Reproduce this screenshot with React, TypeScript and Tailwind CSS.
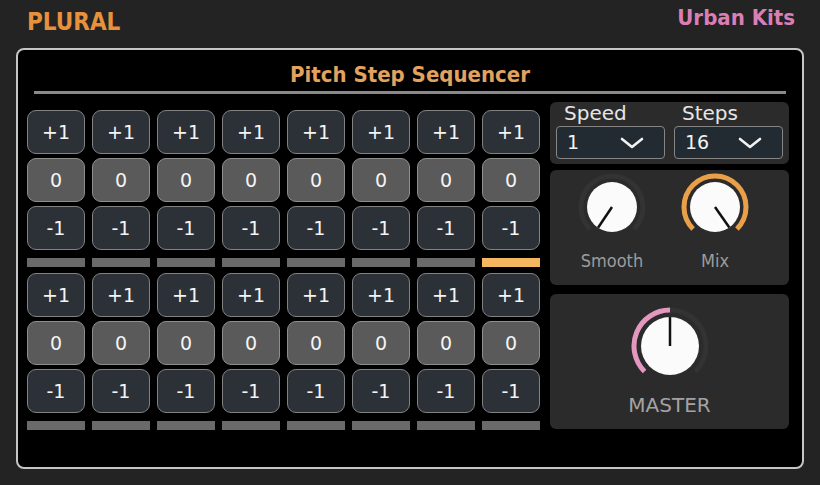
import React from "react";

const cond = { fontFamily: '"DejaVu Sans Condensed", "DejaVu Sans", sans-serif' };

function polar(cx: number, cy: number, r: number, deg: number) {
  const a = (deg * Math.PI) / 180;
  return [cx + r * Math.cos(a), cy + r * Math.sin(a)];
}

function arc(cx: number, cy: number, r: number, from: number, to: number) {
  const [x0, y0] = polar(cx, cy, r, from);
  const [x1, y1] = polar(cx, cy, r, to);
  const large = to - from > 180 ? 1 : 0;
  return `M ${x0} ${y0} A ${r} ${r} 0 ${large} 1 ${x1} ${y1}`;
}

function Knob({
  size,
  r,
  ring,
  value,
  color,
  pointer,
}: {
  size: number;
  r: number;
  ring: number;
  value: number;
  color: string;
  pointer: number;
}) {
  const c = size / 2;
  const [px, py] = polar(c, c, r, pointer);
  return (
    <svg width={size} height={size} viewBox={`0 0 ${size} ${size}`}>
      <path d={arc(c, c, ring, 135, 405)} stroke="#333" strokeWidth="5" fill="none" />
      {value > 135 && (
        <path d={arc(c, c, ring, 135, value)} stroke={color} strokeWidth="5" fill="none" />
      )}
      <circle cx={c} cy={c} r={r} fill="#fbfbfb" />
      <line x1={c} y1={c} x2={px} y2={py} stroke="#111" strokeWidth="2.5" />
    </svg>
  );
}

function StepButton({ label, mid }: { label: string; mid?: boolean }) {
  return (
    <div
      className={`h-[44px] w-[58px] rounded-[9px] border-[1.5px] flex items-center justify-center text-[19px] text-[#f4f4f4] ${
        mid ? "bg-[#5a5a5a] border-[#8e8e8e]" : "bg-[#2c3137] border-[#828282]"
      }`}
    >
      {label}
    </div>
  );
}

function StepGroup({ active }: { active: number }) {
  return (
    <div className="flex gap-[7px]">
      {Array.from({ length: 8 }).map((_, i) => (
        <div key={i} className="flex flex-col gap-[4px]">
          <StepButton label="+1" />
          <StepButton label="0" mid />
          <StepButton label="-1" />
          <div
            className={`mt-[4px] h-[9px] w-[58px] ${
              i === active ? "bg-[#f4b75f]" : "bg-[#6a6a6a]"
            }`}
          />
        </div>
      ))}
    </div>
  );
}

function Dropdown({ value }: { value: string }) {
  return (
    <div className="h-[33px] w-[110px] rounded-[4px] border-[1.5px] border-[#858585] bg-[#222b32] flex items-center justify-between pl-[10px] pr-[20px] text-[19px] text-[#f2f2f2]">
      <span>{value}</span>
      <svg width="24" height="12" viewBox="0 0 24 12">
        <path d="M2 2 L12 10 L22 2" stroke="#f2f2f2" strokeWidth="2.6" fill="none" strokeLinecap="round" strokeLinejoin="round" />
      </svg>
    </div>
  );
}

export default function App() {
  return (
    <div
      className="w-[820px] h-[485px] bg-[#232323] overflow-hidden"
      style={{ fontFamily: '"DejaVu Sans", sans-serif' }}
    >
      <div className="flex justify-between h-[48px]">
        <div className="ml-[27px] mt-[10px] text-[24px] leading-none font-bold text-[#e8913c]" style={cond}>
          PLURAL
        </div>
        <div className="mr-[25px] mt-[7px] text-[22px] leading-none font-bold text-[#d97fb5]" style={cond}>
          Urban Kits
        </div>
      </div>

      <div className="ml-[16px] w-[788px] h-[421px] rounded-[8px] border-2 border-[#c6c6c6] bg-black">
        <div
          className="pt-[14px] text-center text-[22px] leading-none font-bold text-[#e2a35f]"
          style={cond}
        >
          Pitch Step Sequencer
        </div>
        <div className="mx-[16px] mt-[5px] h-[3px] bg-[#8a8a8a]" />

        <div className="flex pl-[9px] pt-[8px] gap-[10px]">
          <div className="mt-[8px] flex flex-col gap-[6px]">
            <StepGroup active={7} />
            <StepGroup active={-1} />
          </div>

          <div className="w-[239px] flex flex-col">
            <div className="h-[62px] rounded-[6px] bg-[#2b2b2b] px-[6px]">
              <div className="flex gap-[9px] text-[20px] leading-none text-[#e6e6e6]">
                <div className="w-[110px] pl-[8px] pt-[1px]">Speed</div>
                <div className="w-[110px] pl-[8px] pt-[1px]">Steps</div>
              </div>
              <div className="flex gap-[9px] mt-[3px]">
                <Dropdown value="1" />
                <Dropdown value="16" />
              </div>
            </div>

            <div className="mt-[6px] h-[115px] rounded-[6px] bg-[#2b2b2b] flex pl-[25px] gap-[29px]">
              <div className="flex flex-col items-center w-[74px]">
                <Knob size={74} r={25} ring={31} value={135} color="#e8a04a" pointer={124} />
                <div className="mt-[8px] text-[18px] leading-none text-[#9c9c9c]" style={cond}>
                  Smooth
                </div>
              </div>
              <div className="flex flex-col items-center w-[74px]">
                <Knob size={74} r={25} ring={31} value={405} color="#eaa048" pointer={55} />
                <div className="mt-[8px] text-[18px] leading-none text-[#9c9c9c]" style={cond}>
                  Mix
                </div>
              </div>
            </div>

            <div className="mt-[9px] h-[135px] rounded-[6px] bg-[#2b2b2b] flex flex-col items-center pt-[12px]">
              <Knob size={80} r={29} ring={36} value={270} color="#e497bf" pointer={270} />
              <div className="mt-[9px] text-[20px] leading-none text-[#a3a3a3]">MASTER</div>
            </div>
          </div>
        </div>
      </div>
    </div>
  );
}
